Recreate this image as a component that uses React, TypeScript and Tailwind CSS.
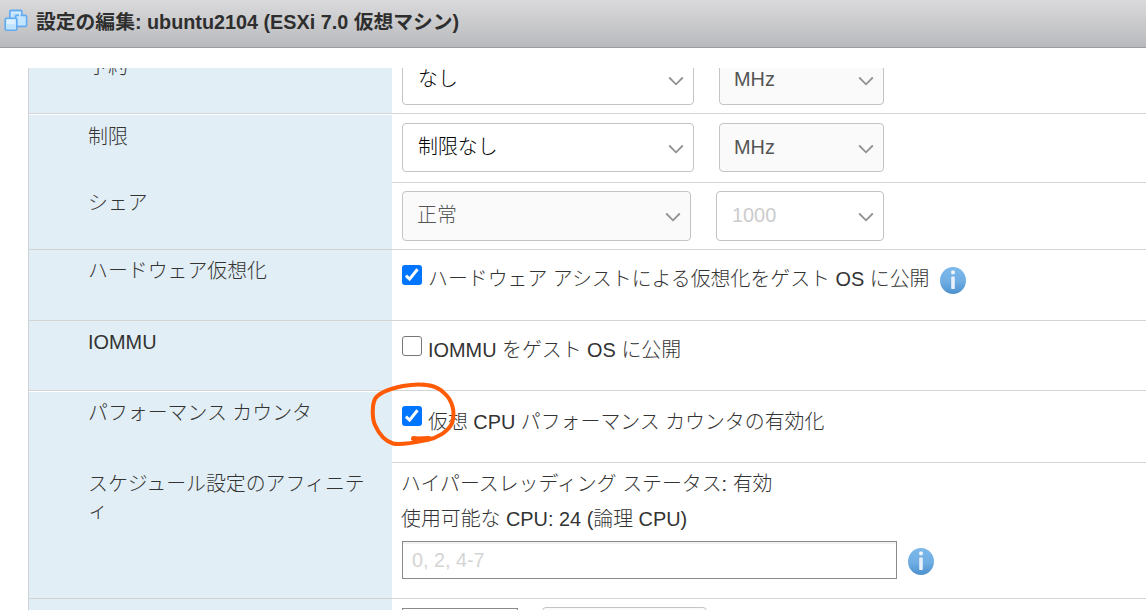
import type { ReactNode } from 'react';
import clsx from 'clsx';

function InfoIcon({ className }: { className?: string }) {
  return (
    <svg viewBox="0 0 26 27" className={clsx('h-[27px] w-[26px] shrink-0', className)}>
      <defs>
        <linearGradient id="info-fill" x1="0" y1="0" x2="0" y2="1">
          <stop offset="0" stopColor="#7db9ea" />
          <stop offset="0.55" stopColor="#6fade3" />
          <stop offset="1" stopColor="#4c90cd" />
        </linearGradient>
      </defs>
      <ellipse cx="13" cy="13.5" rx="13" ry="13.5" fill="url(#info-fill)" />
      <rect x="11.2" y="3.4" width="3.6" height="3.8" rx="1" fill="#f1f6fc" />
      <rect x="11.2" y="9.6" width="3.6" height="12.4" rx="0.8" fill="#e8f1fa" />
    </svg>
  );
}

function VmIcon() {
  return (
    <svg viewBox="0 0 24 24" className="h-6 w-6 shrink-0" stroke="#62abf0" strokeWidth="1.6">
      <rect x="5.8" y="2.4" width="12.2" height="10.6" rx="1.2" fill="#b4dcfb" />
      <rect x="11.6" y="7.4" width="11" height="11" rx="1.2" fill="#c4e5fe" />
      <path d="M8 8.600V4.600h7.800v4.500" fill="none" stroke="#d9efff" strokeWidth="1.4" />
      <rect x="1.2" y="10.2" width="11.6" height="12" rx="1.2" fill="#bfe3fd" />
      <path d="M2.700 11.700h8.600v4.500H2.700z" fill="#dbf1ff" stroke="none" />
    </svg>
  );
}

function Checkbox({ checked }: { checked?: boolean }) {
  return (
    <span
      className={clsx(
        'flex h-5 w-5 shrink-0 items-center justify-center rounded-[3px]',
        checked ? 'bg-[#0075ff]' : 'border-[1.5px] border-[#767676] bg-white',
      )}
    >
      {checked && (
        <svg viewBox="0 0 20 20" className="h-5 w-5" fill="none" stroke="#fff" strokeWidth="3">
          <path d="M3.900 10.600l3.700 3.500 7.900-9.800" />
        </svg>
      )}
    </span>
  );
}

type SelectProps = { value: string; className: string };

function Select({ value, className }: SelectProps) {
  return (
    <div
      className={clsx(
        'flex shrink-0 items-center justify-between rounded-[4px] border border-[#c4c4c4] pr-[9px] pb-0.5',
        className,
      )}
    >
      <span className="leading-7">{value}</span>
      <svg viewBox="0 0 16 10" className="mt-1 h-2.5 w-4" fill="none" stroke="#919191" strokeWidth="1.8">
        <path d="M1.2 1.5L8 8.3l6.800-6.800" />
      </svg>
    </div>
  );
}

type RowProps = {
  label?: string;
  height: string;
  labelClass?: string;
  bodyClass?: string;
  joined?: boolean;
  gap?: boolean;
  children: ReactNode;
};

// joined: the label cell runs into the next row without a divider
function Row({ label, height, labelClass, bodyClass, joined, gap, children }: RowProps) {
  return (
    <div className={clsx('flex shrink-0 overflow-hidden', height)}>
      <div
        className={clsx(
          'w-[364px] shrink-0 border-l border-l-[#d0d4d6] bg-[#e2eef5] pr-5 pl-[59px]',
          !joined && 'border-b border-b-[#d2d4d5]',
        )}
      >
        {gap && <div className="-mr-5 -mb-px -ml-[59px] h-px bg-white" />}
        <div className={clsx('leading-7', labelClass)}>{label}</div>
      </div>
      <div className={clsx('flex-1 border-b border-b-[#d4d4d4] pl-2.5', bodyClass)}>{children}</div>
    </div>
  );
}

export default function App() {
  return (
    <div className="relative flex h-[610px] w-[1146px] flex-col overflow-hidden bg-white font-['Liberation_Sans','Noto_Sans_CJK_JP',sans-serif] text-[19.9px] font-light text-[#333]">
      <header className="flex h-12 shrink-0 items-start border-b border-[#9c9ca0] bg-linear-to-b from-[#dadadc] to-[#b9babd] pt-2 pl-1">
        <VmIcon />
        <h1 className="ml-2 text-[19.8px] leading-7 font-bold text-[#2e2e2e]">設定の編集: ubuntu2104 (ESXi 7.0 仮想マシン)</h1>
      </header>

      <main className="mt-5 ml-7 flex min-h-0 flex-1 flex-col overflow-hidden">
        <Row label="予約" height="h-[46px]" labelClass="-mt-[15px]" bodyClass="flex">
          <Select value="なし" className="-mt-[13px] h-[50px] w-[292px] pl-[15px] text-black" />
          <Select value="MHz" className="-mt-[13px] ml-[25px] h-[50px] w-[165px] bg-[#fafafa] pl-3.5 text-[#555]" />
        </Row>
        <Row label="制限" height="h-[69px]" labelClass="pt-[9px]" bodyClass="flex pt-[9px]" joined gap>
          <Select value="制限なし" className="h-[49px] w-[292px] pl-[15px] text-black" />
          <Select value="MHz" className="ml-[25px] h-[49px] w-[165px] bg-[#fafafa] pl-3.5 text-[#555]" />
        </Row>
        <Row label="シェア" height="h-[67px]" labelClass="pt-1.5" bodyClass="flex pt-2">
          <Select value="正常" className="h-[50px] w-[289px] bg-[#fafafa] pl-3.5 text-[#555]" />
          <Select value="1000" className="ml-[25px] h-[50px] w-[168px] pl-[15px] text-[#ccc]" />
        </Row>
        <Row label="ハードウェア仮想化" height="h-[71px]" labelClass="pt-[7px]" bodyClass="flex items-start pt-[15px]">
          <Checkbox checked />
          <span className="ml-1.5 leading-7">ハードウェア アシストによる仮想化をゲスト OS に公開</span>
          <InfoIcon className="mt-0.5 ml-[11px]" />
        </Row>
        <Row label="IOMMU" height="h-[70px]" labelClass="pt-[7px]" bodyClass="flex items-start pt-[15px]">
          <Checkbox />
          <span className="ml-1.5 leading-7">IOMMU をゲスト OS に公開</span>
        </Row>
        <Row label="パフォーマンス カウンタ" height="h-[72px]" labelClass="pt-2" bodyClass="flex items-start pt-[15px]" joined gap>
          <Checkbox checked />
          <span className="mt-0.5 ml-1.5 leading-7">仮想 CPU パフォーマンス カウンタの有効化</span>
        </Row>
        <Row
          label="スケジュール設定のアフィニティ"
          height="h-[136px]"
          labelClass="pt-2 leading-[27px] break-all"
          bodyClass="pt-1"
        >
          <p className="-ml-px leading-[35px]">ハイパースレッディング ステータス: 有効</p>
          <p className="-ml-px leading-[35px]">使用可能な CPU: 24 (論理 CPU)</p>
          <div className="mt-1 flex">
            <div className="h-[38px] w-[495px] border border-[#8a8a8a] pl-[9px] text-[19.8px] leading-9 text-[#d4d4d4] shadow-[inset_0_2px_1px_#f1f1f1]">
              0, 2, 4-7
            </div>
            <InfoIcon className="mt-[7px] ml-[11px]" />
          </div>
        </Row>
        <Row height="h-[80px]" bodyClass="flex pt-2">
          <div className="mt-px h-[38px] w-[116px] border border-[#8a8a8a]" />
          <div className="ml-6 h-[49px] w-[165px] rounded-[4px] border border-[#c4c4c4] bg-[#fafafa]" />
        </Row>
      </main>

      {/* hand-drawn marker around the performance counter checkbox */}
      <svg
        viewBox="0 0 100 80"
        className="absolute top-[375px] left-[365px] h-20 w-[100px]"
        fill="none"
        stroke="#ff5a05"
        strokeLinecap="round"
        strokeLinejoin="round"
      >
        <path
          d="M79 18C71 9 54 8 38 11C26 13.500 14 17 10 24C7 30 7 43 10 50C14 59 20 66 28 68.500C36 70.500 50 67.500 62 65C72 63 83 57 87 48C90 39 89 26 78 17C73 12.500 66 10 58 9.800"
          strokeWidth="4"
        />
        <path d="M48.500 63.500C53 64.500 58 63.500 64 63.500" strokeWidth="5" />
      </svg>
    </div>
  );
}
